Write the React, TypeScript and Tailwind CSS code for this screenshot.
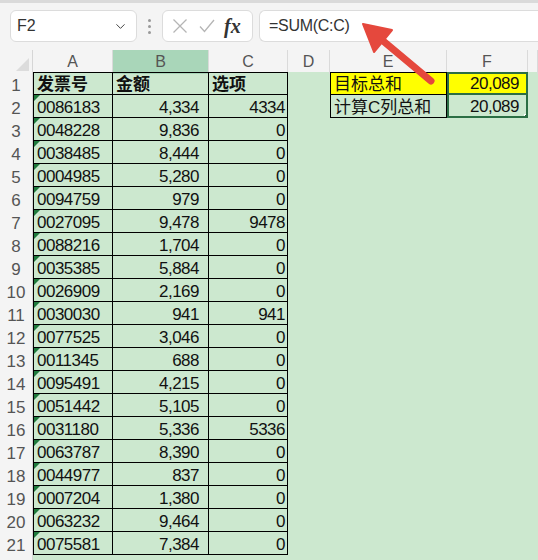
import { ChevronDown } from "lucide-react";

const data: [string, string, string][] = [
  ["0086183", "4,334", "4334"],
  ["0048228", "9,836", "0"],
  ["0038485", "8,444", "0"],
  ["0004985", "5,280", "0"],
  ["0094759", "979", "0"],
  ["0027095", "9,478", "9478"],
  ["0088216", "1,704", "0"],
  ["0035385", "5,884", "0"],
  ["0026909", "2,169", "0"],
  ["0030030", "941", "941"],
  ["0077525", "3,046", "0"],
  ["0011345", "688", "0"],
  ["0095491", "4,215", "0"],
  ["0051442", "5,105", "0"],
  ["0031180", "5,336", "5336"],
  ["0063787", "8,390", "0"],
  ["0044977", "837", "0"],
  ["0007204", "1,380", "0"],
  ["0063232", "9,464", "0"],
  ["0075581", "7,384", "0"],
];

const font = { fontFamily: '"Liberation Sans", "Noto Sans CJK SC", sans-serif' };
const cols = "grid grid-cols-[33px_80px_96px_79px_42px_117px_81px_1fr]";
const cell = "flex items-end pb-[1px] leading-none h-[23px] text-[17px] text-[#111] overflow-hidden whitespace-nowrap";

function Toolbar() {
  return (
    <div className="h-[50px] bg-[#f4f4f4]">
      <div className="h-[3px] bg-[#dadada]" />
      <div className="flex items-center pt-[7px]">
        {/* name box */}
        <div className="ml-[10px] w-[127px] h-[32px] rounded-[6px] border border-[#dcdcdc] bg-white flex items-center pl-[6px] pr-[8px]">
          <span className="text-[16px] text-[#333]">F2</span>
          <ChevronDown className="ml-auto text-[#444]" size={15} strokeWidth={1.6} />
        </div>
        <div className="w-[25px] flex flex-col items-center gap-[3px]">
          <span className="w-[3px] h-[3px] rounded-full bg-[#999]" />
          <span className="w-[3px] h-[3px] rounded-full bg-[#999]" />
          <span className="w-[3px] h-[3px] rounded-full bg-[#999]" />
        </div>
        {/* fx box */}
        <div className="w-[91px] h-[32px] rounded-[6px] border border-[#dcdcdc] bg-white flex items-center pl-[9px]">
          <svg width="16" height="16" viewBox="0 0 16 16" className="text-[#b5b5b5]">
            <path d="M1.5 1.5 L14.5 14.5 M14.5 1.5 L1.5 14.5" stroke="currentColor" strokeWidth="1.3" fill="none" />
          </svg>
          <svg width="16" height="14" viewBox="0 0 16 14" className="ml-[11px] text-[#b5b5b5]">
            <path d="M1 7.5 L5.5 12.5 L15 1" stroke="currentColor" strokeWidth="1.3" fill="none" />
          </svg>
          <span
            className="ml-[9px] text-[20px] italic font-bold text-[#333] leading-none"
            style={{ fontFamily: '"Liberation Serif", serif' }}
          >
            fx
          </span>
        </div>
        {/* formula bar */}
        <div className="ml-[6px] flex-1 h-[32px] rounded-l-[6px] border border-r-0 border-[#dcdcdc] bg-white flex items-center pl-[9px]">
          <span className="text-[16px] text-[#333] tracking-[-0.3px]">=SUM(C:C)</span>
        </div>
      </div>
    </div>
  );
}

function HeaderRow() {
  const letters = ["A", "B", "C", "D", "E", "F", ""];
  return (
    <div className={`${cols} h-[22px] bg-[#f4f4f4]`}>
      <div className="relative border-r border-[#d6d6d6]">
        <svg width="13" height="13" viewBox="0 0 13 13" className="absolute right-[3px] bottom-[3px]">
          <path d="M13 0 L13 13 L0 13 Z" fill="#dcdcdc" />
        </svg>
      </div>
      {letters.map((l, i) => (
        <div
          key={i}
          className={`flex items-center justify-center text-[16px] text-[#555] border-r border-[#dadada] ${
            l === "B" ? "bg-[#a9d6b9]" : ""
          }`}
        >
          {l}
        </div>
      ))}
    </div>
  );
}

function Triangle() {
  return (
    <svg width="6" height="6" viewBox="0 0 6 6" className="absolute top-0 left-0">
      <path d="M0 0 L6 0 L0 6 Z" fill="#1f7a3d" />
    </svg>
  );
}

export default function App() {
  const rows: { a: string; b: string; c: string; head?: boolean }[] = [
    { a: "发票号", b: "金额", c: "选项", head: true },
    ...data.map(([a, b, c]) => ({ a, b, c })),
  ];

  return (
    <div className="relative w-[538px] h-[560px] overflow-hidden bg-[#cce8cf]" style={font}>
      <Toolbar />
      <HeaderRow />
      {rows.map((r, i) => {
        const n = i + 1;
        const bd = `border-b border-black ${n === 1 ? "border-t" : ""}`;
        return (
          <div key={i} className={cols}>
            <div className={`${cell} justify-center bg-[#f4f4f4] text-[16px] text-[#555] border-r border-[#d6d6d6]`}>
              {n}
            </div>
            <div className={`${cell} relative pl-[3px] border-l border-r ${bd} ${r.head ? "font-bold" : ""}`}>
              {!r.head && <Triangle />}
              <span className={r.head ? "" : "tracking-[-0.5px]"}>{r.a}</span>
            </div>
            <div className={`${cell} ${r.head ? "justify-start pl-[3px] font-bold" : "justify-end pr-[9px]"} border-r ${bd}`}>
              <span className={r.head ? "" : "tracking-[-0.5px]"}>{r.b}</span>
            </div>
            <div className={`${cell} ${r.head ? "justify-start pl-[3px] font-bold" : "justify-end pr-[2px]"} border-r ${bd}`}>
              <span className={r.head ? "" : "tracking-[-0.5px]"}>{r.c}</span>
            </div>
            <div className={cell} />
            {n === 1 && (
              <>
                <div className={`${cell} pl-[3px] bg-[#ffff00] border border-black`}>目标总和</div>
                <div className={`${cell} justify-end pr-[7px] bg-[#ffff00] border-2 border-[#2b6e44] tracking-[-0.5px]`}>20,089</div>
              </>
            )}
            {n === 2 && (
              <>
                <div className={`${cell} pl-[3px] border-x border-b border-black`}>计算C列总和</div>
                <div className={`${cell} relative justify-end pr-[7px] border-x-2 border-b-2 border-[#2b6e44] tracking-[-0.5px]`}>
                  20,089
                  <span className="absolute -right-[4px] -bottom-[4px] w-[6px] h-[6px] bg-[#2b6e44] border border-white" />
                </div>
              </>
            )}
            {n > 2 && (
              <>
                <div className={cell} />
                <div className={cell} />
              </>
            )}
            <div className={cell} />
          </div>
        );
      })}
      {/* last partly visible row */}
      <div className={`${cols} h-[5px]`}>
        <div className="bg-[#f4f4f4] border-r border-[#d6d6d6]" />
      </div>
      {/* red arrow overlay */}
      <svg width="538" height="560" className="absolute top-0 left-0 pointer-events-none">
        <line x1="431" y1="81" x2="382" y2="40" stroke="#e5483d" strokeWidth="7" strokeLinecap="round" />
        <path d="M363 24 L392 30 L374 52 Z" fill="#e5483d" stroke="#e5483d" strokeWidth="2" strokeLinejoin="round" />
      </svg>
    </div>
  );
}
